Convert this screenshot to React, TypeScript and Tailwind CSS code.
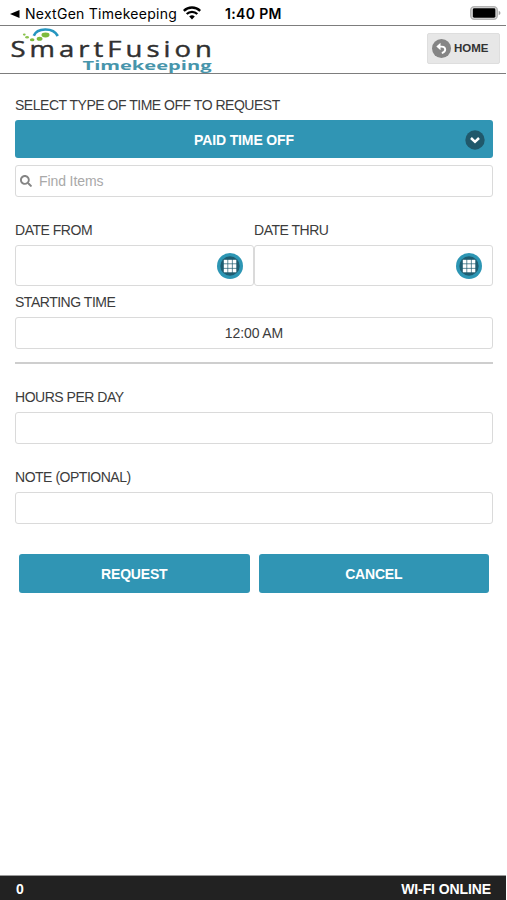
import React from 'react';
import { FaSearch } from 'react-icons/fa';

const Wifi: React.FC = () => (
  <svg viewBox="0 0 18 14" className="w-[18px] h-[14px]" fill="none" stroke="black" strokeWidth="2.3">
    <path d="M0.8 4.9a11.6 11.6 0 0 1 16.4 0" />
    <path d="M3.7 8a7.5 7.5 0 0 1 10.6 0" />
    <path d="M9 13.4 L6.2 10.6a4 4 0 0 1 5.6 0z" fill="black" stroke="none" />
  </svg>
);

const Battery: React.FC = () => (
  <svg viewBox="0 0 32 14" className="w-8 h-[14px]">
    <rect x="0.8" y="0.8" width="26.4" height="12.4" rx="3.4" fill="#e4e4e4" stroke="#b4b4b4" strokeWidth="1.6" />
    <rect x="2.8" y="2.3" width="22.6" height="9.4" rx="1.4" fill="black" />
    <path d="M28.7 4.8q1.8 0.8 1.8 2.2t-1.8 2.2z" fill="#a0a0a0" />
  </svg>
);

const Logo: React.FC = () => (
  <svg viewBox="0 0 212 47" className="w-[212px] h-[47px]">
    <path d="M25.8 9.8C29 1.8 45 1 49.8 10" fill="none" stroke="#2596c0" strokeWidth="2.7" />
    <ellipse cx="37.5" cy="9" rx="4" ry="2.4" fill="#7dba3c" />
    <ellipse cx="31.6" cy="12.8" rx="2.9" ry="2" fill="#7dba3c" />
    <ellipse cx="24.2" cy="13.7" rx="2.3" ry="1.5" fill="#7dba3c" />
    <ellipse cx="19.1" cy="11.3" rx="1.9" ry="1.3" fill="#8bc34f" />
    <ellipse cx="16.3" cy="8.6" rx="1.4" ry="1.1" fill="#8bc34f" />
    <text
      transform="translate(2.4 31) scale(1.28 1)"
      textLength="157.5"
      className="font-['Open_Sans',sans-serif] text-[21.5px]"
      fill="#303030"
      stroke="#303030"
      strokeWidth="0.4"
    >
      SmartFusion
    </text>
    <text
      x="74.5"
      y="44"
      textLength="129"
      lengthAdjust="spacingAndGlyphs"
      className="font-['Open_Sans',sans-serif] text-[12.5px] font-bold"
      fill="#4795ab"
    >
      Timekeeping
    </text>
  </svg>
);

const BackIcon: React.FC = () => (
  <svg viewBox="0 0 19 19" className="w-[19px] h-[19px]">
    <circle cx="9.5" cy="9.5" r="9.5" fill="#858585" />
    <path d="M7 7.6h2.6c2.2 0 3.6 1.2 3.6 3 0 1.7-1.3 3-3.4 3.5" fill="none" stroke="white" strokeWidth="1.9" />
    <path d="M8.5 3.7v7.6L4.3 7.5z" fill="white" />
  </svg>
);

const ChevronBadge: React.FC = () => (
  <svg viewBox="0 0 20 20" className="w-5 h-5">
    <circle cx="10" cy="10" r="9.7" fill="#20586b" />
    <path d="M6 8l4 3.8L14 8" fill="none" stroke="white" strokeWidth="2.5" />
  </svg>
);

const GridBadge: React.FC = () => (
  <svg viewBox="0 0 26 26" className="w-[26px] h-[26px]">
    <circle cx="13" cy="13" r="13" fill="#2d96b4" />
    <circle cx="13" cy="13" r="9.7" fill="#1f5c70" />
    {[6.8, 11.2, 15.6].map((y) =>
      [6.8, 11.2, 15.6].map((x) => <rect key={`${x}-${y}`} x={x} y={y} width="3.7" height="3.7" fill="white" />)
    )}
  </svg>
);

const Label: React.FC<{ className?: string; children: React.ReactNode }> = ({ className = '', children }) => (
  <div className={`h-5 leading-5 text-sm tracking-[-0.48px] whitespace-nowrap text-[#3c3c3c] ${className}`}>
    {children}
  </div>
);

const DateField: React.FC<{ label: string }> = ({ label }) => (
  <div className="flex-1">
    <Label>{label}</Label>
    <div className="mt-[5px] h-[41px] rounded-[3px] border border-[#dadada] flex items-center justify-end pr-2.5">
      <GridBadge />
    </div>
  </div>
);

const fieldClass = 'w-full rounded-[3px] border border-[#dadada]';
const buttonClass =
  'h-[39px] rounded-[3px] bg-[#3095b4] text-white text-sm tracking-[-0.2px] font-bold flex items-center justify-center';

const App: React.FC = () => {
  return (
    <div className="w-[507px] h-[900px] flex flex-col overflow-hidden bg-white font-['Liberation_Sans',Arial,sans-serif]">
      {/* Status bar */}
      <div className="h-[25px] grid grid-cols-[225px_1fr_auto] items-center font-[Inter,sans-serif] text-sm text-black">
        <div className="flex items-center pl-2.5 pt-[3px]">
          <svg viewBox="0 0 10 8" className="w-2.5 h-2 mr-[5px]">
            <path d="M0 4L9.5 0v8z" />
          </svg>
          <span className="whitespace-nowrap tracking-[0.26px]">NextGen Timekeeping</span>
          <span className="ml-1.5 pb-0.5"><Wifi /></span>
        </div>
        <span className="font-semibold pt-[3px] tracking-[0.35px]">1:40 PM</span>
        <div className="pr-[5px] pt-px"><Battery /></div>
      </div>

      {/* Header */}
      <header className="h-[49px] mr-px border-y border-[#7d7d7d] flex justify-between items-start">
        <div className="pl-2"><Logo /></div>
        <button className="mt-[7px] mr-[6px] w-[73px] h-[31px] rounded-[2px] border border-[#dedede] bg-[#e7e7e7] flex items-center pl-1 gap-[3px] text-[11.5px] font-bold text-[#333]">
          <BackIcon />
          HOME
        </button>
      </header>

      {/* Request form */}
      <main className="flex-1 pl-[15px] pr-[14px] pt-[21px]">
        <Label>SELECT TYPE OF TIME OFF TO REQUEST</Label>
        <button className="mt-[5px] w-full h-[38px] rounded-[3px] bg-[#3095b4] text-white text-sm tracking-[-0.13px] font-bold flex items-center pr-2 pt-0.5">
          <span className="flex-1 pl-2">PAID TIME OFF</span>
          <ChevronBadge />
        </button>
        <div className={`${fieldClass} mt-[7px] h-8 flex items-center pl-1 text-sm tracking-[-0.1px] text-[#a9a9a9]`}>
          <FaSearch className="w-3 h-3 mr-[7px] text-[#858585]" />
          <span>Find Items</span>
        </div>

        <div className="flex mt-[23px]">
          <DateField label="DATE FROM" />
          <DateField label="DATE THRU" />
        </div>

        <Label className="mt-1.5">STARTING TIME</Label>
        <div className={`${fieldClass} mt-[5px] h-8 flex items-center justify-center text-sm tracking-[-0.1px] text-[#3c3c3c]`}>12:00 AM</div>
        <div className="mt-[13px] h-[2px] bg-[#cecece]" />

        <Label className="mt-[23px]">HOURS PER DAY</Label>
        <div className={`${fieldClass} mt-[5px] h-8`} />

        <Label className="mt-[23px]">NOTE (OPTIONAL)</Label>
        <div className={`${fieldClass} mt-[5px] h-8`} />

        <div className="grid grid-cols-2 gap-[9px] mt-[30px] px-1">
          <button className={buttonClass}>REQUEST</button>
          <button className={buttonClass}>CANCEL</button>
        </div>
      </main>

      <footer className="h-[25px] mr-px border-t border-[#9a9a9a] bg-[#222] flex items-center justify-between pl-4 pr-[15px] pt-px text-sm tracking-[-0.1px] font-bold text-white">
        <span>0</span>
        <span>WI-FI ONLINE</span>
      </footer>
    </div>
  );
};

export default App;
